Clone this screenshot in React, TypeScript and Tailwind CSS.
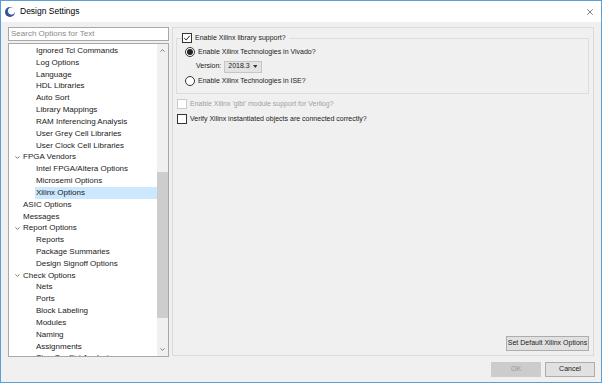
import { ChevronDown, ChevronUp, X } from "lucide-react";

type Row = { label: string; level: 1 | 2; open?: boolean; selected?: boolean };

const rows: Row[] = [
  { label: "Ignored Tcl Commands", level: 2 },
  { label: "Log Options", level: 2 },
  { label: "Language", level: 2 },
  { label: "HDL Libraries", level: 2 },
  { label: "Auto Sort", level: 2 },
  { label: "Library Mappings", level: 2 },
  { label: "RAM Inferencing Analysis", level: 2 },
  { label: "User Grey Cell Libraries", level: 2 },
  { label: "User Clock Cell Libraries", level: 2 },
  { label: "FPGA Vendors", level: 1, open: true },
  { label: "Intel FPGA/Altera Options", level: 2 },
  { label: "Microsemi Options", level: 2 },
  { label: "Xilinx Options", level: 2, selected: true },
  { label: "ASIC Options", level: 1 },
  { label: "Messages", level: 1 },
  { label: "Report Options", level: 1, open: true },
  { label: "Reports", level: 2 },
  { label: "Package Summaries", level: 2 },
  { label: "Design Signoff Options", level: 2 },
  { label: "Check Options", level: 1, open: true },
  { label: "Nets", level: 2 },
  { label: "Ports", level: 2 },
  { label: "Block Labeling", level: 2 },
  { label: "Modules", level: 2 },
  { label: "Naming", level: 2 },
  { label: "Assignments", level: 2 },
  { label: "Sign Conflict Analysis", level: 2 },
];

function Check({ disabled }: { disabled?: boolean }) {
  return (
    <span
      className={`w-[10px] h-[10px] border bg-white shrink-0 ${
        disabled ? "border-[#cccccc]" : "border-[#333333]"
      }`}
    />
  );
}

function Radio({ on }: { on?: boolean }) {
  return (
    <span className="w-[10px] h-[10px] rounded-full border border-[#333333] bg-white shrink-0 flex items-center justify-center">
      {on && <span className="w-[6px] h-[6px] rounded-full bg-[#222222]" />}
    </span>
  );
}

export default function App() {
  return (
    <div
      className="w-[602px] h-[383px] border border-[#5a9fd8] bg-[#f0f0f0] flex flex-col overflow-hidden text-[#1a1a1a]"
      style={{ fontFamily: '"Liberation Sans", Arial, sans-serif' }}
    >
      {/* Title bar */}
      <div className="h-[21px] bg-white flex items-center shrink-0">
        <div className="ml-[4px] w-[10px] h-[10px] rounded-full bg-[radial-gradient(circle_at_65%_40%,#ffffff_0_35%,#3b5fa8_45%,#1c2f66_100%)]" />
        <span className="ml-[5px] text-[8.5px] text-black">Design Settings</span>
        <X className="ml-auto mr-[6px] w-[10px] h-[10px] text-[#333]" strokeWidth={1.5} />
      </div>

      <div className="flex-1 flex px-[7px] pt-[5px] gap-[3px]">
        {/* Left column */}
        <div className="w-[161px] flex flex-col gap-[2px]">
          <div className="h-[14px] border border-[#a8a8a8] bg-white flex items-center px-[2px] text-[8px] text-[#8a8a8a]">
            Search Options for Text
          </div>
          <div className="h-[314px] border border-[#a8a8a8] bg-white flex overflow-hidden">
            <div className="flex-1 pt-[1px] overflow-hidden">
              {rows.map((r) => (
                <div key={r.label} className="h-[11.84px] flex items-center text-[8px] leading-none whitespace-nowrap">
                  {r.level === 1 ? (
                    <>
                      <span className="w-[14px] flex justify-end pr-[2px]">
                        {r.open && <ChevronDown className="w-[7px] h-[7px] text-[#444]" strokeWidth={2.5} />}
                      </span>
                      <span>{r.label}</span>
                    </>
                  ) : (
                    <span
                      className={`ml-[26px] pl-[1px] h-full flex items-center flex-1 ${
                        r.selected ? "bg-[#cce8ff]" : ""
                      }`}
                    >
                      {r.label}
                    </span>
                  )}
                </div>
              ))}
            </div>
            <div className="w-[11px] bg-[#f0f0f0] flex flex-col items-center shrink-0">
              <ChevronUp className="w-[7px] h-[7px] mt-[3px] text-[#555]" strokeWidth={2.5} />
              <div className="w-full h-[146px] mt-[118px] bg-[#cdcdcd]" />
              <ChevronDown className="w-[7px] h-[7px] mt-auto mb-[3px] text-[#555]" strokeWidth={2.5} />
            </div>
          </div>
        </div>

        {/* Right panel */}
        <div className="flex-1 h-[329px] border border-[#dadada] flex flex-col text-[7px] pr-[8px] pb-[4px]">
          <div className="relative mt-[10px] ml-[3px] mr-[-4px] h-[56px] border border-[#dcdcdc]">
            <div className="absolute -top-[6px] left-[5px] bg-[#f0f0f0] flex items-center gap-[3px] pr-[3px]">
              <span className="w-[10px] h-[10px] border border-[#333333] bg-white flex items-center justify-center">
                <svg viewBox="0 0 10 10" className="w-[8px] h-[8px]">
                  <path d="M1.5 5.2 L4 7.5 L8.5 2.2" fill="none" stroke="#222" strokeWidth="1.2" />
                </svg>
              </span>
              <span>Enable Xilinx library support?</span>
            </div>
            <div className="flex flex-col pl-[8px] pt-[8px] gap-[3px]">
              <div className="flex items-center gap-[3px]">
                <Radio on />
                <span>Enable Xilinx Technologies in Vivado?</span>
              </div>
              <div className="flex items-center ml-[11px] gap-[3px]">
                <span>Version:</span>
                <div className="w-[38px] h-[12px] border border-[#c6c6c6] bg-[#e3e3e3] flex items-center px-[3px] gap-[3px]">
                  <span>2018.3</span>
                  <svg viewBox="0 0 6 4" className="w-[5px] h-[3px] ml-auto mr-[1px]">
                    <path d="M0 0 H6 L3 4 Z" fill="#333" />
                  </svg>
                </div>
              </div>
              <div className="flex items-center gap-[3px]">
                <Radio />
                <span>Enable Xilinx Technologies in ISE?</span>
              </div>
            </div>
          </div>

          <div className="flex items-center gap-[3px] ml-[4px] mt-[5px] text-[#a0a0a0]">
            <Check disabled />
            <span>Enable Xilinx 'glbl' module support for Verilog?</span>
          </div>
          <div className="flex items-center gap-[3px] ml-[4px] mt-[4px]">
            <Check />
            <span>Verify Xilinx instantiated objects are connected correctly?</span>
          </div>

          <div className="mt-auto self-end mr-[-4px] w-[83px] h-[15px] border border-[#adadad] bg-[#e1e1e1] flex items-center justify-center whitespace-nowrap">
            Set Default Xilinx Options
          </div>
        </div>
      </div>

      {/* Footer */}
      <div className="h-[27px] flex items-center justify-end gap-[4px] pr-[6px] pb-[2px] shrink-0 text-[7px]">
        <div className="w-[50px] h-[15px] border border-[#cccccc] bg-[#cccccc] flex items-center justify-center text-[#9a9a9a]">
          OK
        </div>
        <div className="w-[50px] h-[15px] border border-[#adadad] bg-[#e1e1e1] flex items-center justify-center">
          Cancel
        </div>
      </div>
    </div>
  );
}
